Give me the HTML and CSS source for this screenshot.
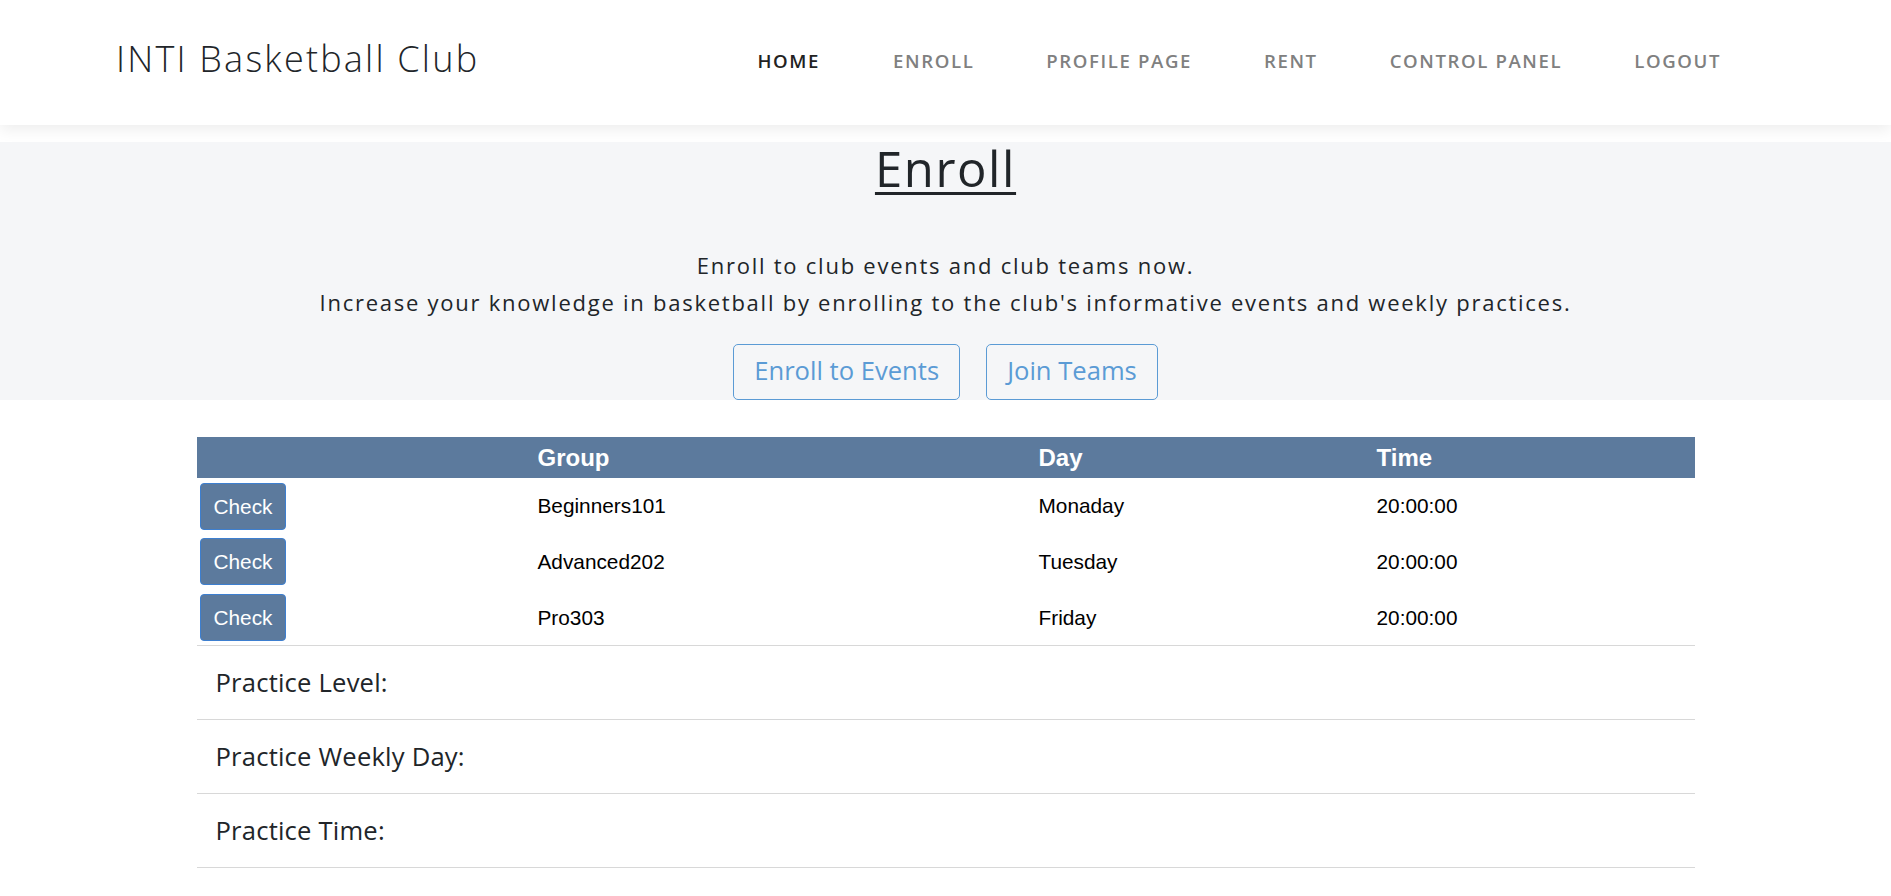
FILE: index.html
```html
<!DOCTYPE html>
<html lang="en">
<head>
<meta charset="utf-8">
<title>Enroll - INTI Basketball Club</title>
<link rel="stylesheet" href="styles.css">
</head>
<body>
<header class="topbar">
  <div class="brand">INTI Basketball Club</div>
  <nav class="nav">
    <a class="nav-link active" href="#">HOME</a>
    <a class="nav-link" href="#">ENROLL</a>
    <a class="nav-link" href="#">PROFILE PAGE</a>
    <a class="nav-link" href="#">RENT</a>
    <a class="nav-link" href="#">CONTROL PANEL</a>
    <a class="nav-link" href="#">LOGOUT</a>
  </nav>
</header>

<section class="hero">
  <h1 class="hero-title">Enroll</h1>
  <p class="hero-text">Enroll to club events and club teams now.<br>Increase your knowledge in basketball by enrolling to the club's informative events and weekly practices.</p>
  <div class="hero-actions">
    <a class="btn-outline" href="#">Enroll to Events</a>
    <a class="btn-outline" href="#">Join Teams</a>
  </div>
</section>

<main class="content">
  <table class="groups">
    <colgroup>
      <col class="col-action">
      <col class="col-group">
      <col class="col-day">
      <col class="col-time">
    </colgroup>
    <thead>
      <tr><th></th><th>Group</th><th>Day</th><th>Time</th></tr>
    </thead>
    <tbody>
      <tr><td><button class="btn-check">Check</button></td><td>Beginners101</td><td>Monaday</td><td>20:00:00</td></tr>
      <tr><td><button class="btn-check">Check</button></td><td>Advanced202</td><td>Tuesday</td><td>20:00:00</td></tr>
      <tr><td><button class="btn-check">Check</button></td><td>Pro303</td><td>Friday</td><td>20:00:00</td></tr>
    </tbody>
  </table>
  <ul class="details">
    <li class="detail">Practice Level:</li>
    <li class="detail">Practice Weekly Day:</li>
    <li class="detail">Practice Time:</li>
  </ul>
</main>
</body>
</html>
```

FILE: styles.css
```css
* { box-sizing: border-box; }

html, body {
  margin: 0;
  padding: 0;
  background: #ffffff;
}

body {
  font-family: "Open Sans", "Noto Sans", sans-serif;
  color: #212529;
}

/* ---------- top bar ---------- */
.topbar {
  height: 125px;
  display: flex;
  align-items: flex-start;
  padding: 0 136px 0 116px;
  background: #ffffff;
  box-shadow: 0 5px 14px rgba(0, 0, 0, 0.07);
  position: relative;
  z-index: 1;
}

.brand {
  padding-top: 41px;
  font-size: 36px;
  line-height: 36px;
  font-weight: 300;
  letter-spacing: 2.2px;
  color: #212529;
}

.nav {
  margin-left: auto;
  display: flex;
  padding-top: 51px;
}

.nav-link {
  padding: 0 36px;
  font-size: 18.6px;
  line-height: 19px;
  font-weight: 600;
  letter-spacing: 1.6px;
  color: #808080;
  text-decoration: none;
}

.nav-link:first-child {
  padding-right: 37px;
}

.nav-link:last-child {
  padding-right: 34px;
}

.nav-link.active {
  color: #222222;
}

/* ---------- hero ---------- */
.hero {
  margin-top: 17px;
  background: #f5f6f8;
  text-align: center;
  padding: 0;
}

.hero-title {
  margin: 0;
  font-size: 49px;
  line-height: 52px;
  font-weight: 400;
  letter-spacing: 1.6px;
  color: #212529;
  text-decoration: underline;
  text-decoration-thickness: 3px;
  text-underline-offset: 5px;
}

.hero-text {
  margin: 53px 0 0;
  font-size: 22px;
  line-height: 37px;
  font-weight: 400;
  letter-spacing: 1.75px;
  color: #212529;
}

.hero-actions {
  margin-top: 23px;
  display: flex;
  justify-content: center;
  gap: 26px;
}

.btn-outline {
  display: inline-block;
  padding: 7px 20px 9px;
  font-size: 25.6px;
  line-height: 38.4px;
  font-weight: 400;
  letter-spacing: 0;
  color: #5b9bd5;
  border: 1px solid #5b9bd5;
  border-radius: 5px;
  text-decoration: none;
}

/* ---------- content ---------- */
.content {
  width: 1498px;
  margin: 37px auto 0;
}

.groups {
  width: 100%;
  border-collapse: collapse;
  table-layout: fixed;
  font-family: "Liberation Sans", Arial, sans-serif;
  color: #000000;
}

.col-action { width: 338px; }
.col-group { width: 501px; }
.col-day { width: 338px; }
.col-time { width: 321px; }

.groups th {
  height: 41px;
  padding: 0 3px;
  background: #5c7a9d;
  color: #ffffff;
  font-size: 24px;
  font-weight: 700;
  text-align: left;
  vertical-align: middle;
}

.groups td {
  height: 55.7px;
  padding: 0 3px;
  font-size: 20.8px;
  text-align: left;
  vertical-align: middle;
}

.btn-check {
  display: block;
  padding: 10px 13px;
  font-family: "Liberation Sans", Arial, sans-serif;
  font-size: 20.8px;
  line-height: 25px;
  color: #ffffff;
  background: #5c7a9d;
  border: 1px solid #3d7fd0;
  border-radius: 4px;
}

.details {
  list-style: none;
  margin: 0;
  padding: 0;
  border-top: 1px solid #d8d8d8;
}

.detail {
  height: 74px;
  padding-left: 19px;
  font-size: 25.6px;
  line-height: 73px;
  font-weight: 400;
  letter-spacing: 0.2px;
  border-bottom: 1px solid #d8d8d8;
  color: #212529;
}
```
